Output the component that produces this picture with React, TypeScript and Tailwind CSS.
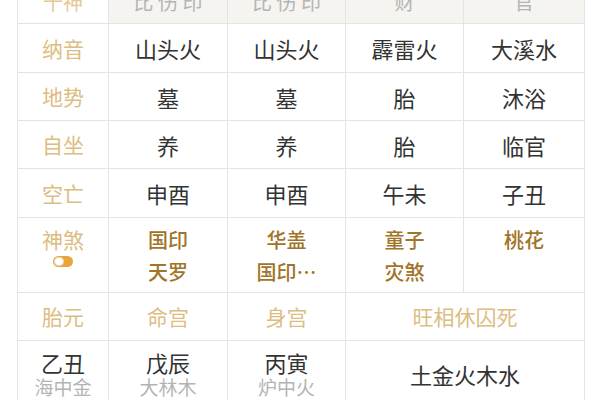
import React from "react";

interface Cell {
  text: string;
  tone?: "label" | "main";
}

// rows of the bazi chart, first column is the label
const rows: { h: string; cells: Cell[] }[] = [
  {
    h: "h-[49px]",
    cells: [{ text: "纳音", tone: "label" }, { text: "山头火" }, { text: "山头火" }, { text: "霹雷火" }, { text: "大溪水" }],
  },
  {
    h: "h-[48px]",
    cells: [{ text: "地势", tone: "label" }, { text: "墓" }, { text: "墓" }, { text: "胎" }, { text: "沐浴" }],
  },
  {
    h: "h-[48px]",
    cells: [{ text: "自坐", tone: "label" }, { text: "养" }, { text: "养" }, { text: "胎" }, { text: "临官" }],
  },
  {
    h: "h-[49px]",
    cells: [{ text: "空亡", tone: "label" }, { text: "申酉" }, { text: "申酉" }, { text: "午未" }, { text: "子丑" }],
  },
];

const shensha = [["国印", "天罗"], ["华盖", "国印…"], ["童子", "灾煞"], ["桃花"]];

const Toggle = () => (
  <div className="mx-auto mt-[6px] flex h-[11px] w-[20px] items-center rounded-full bg-[#e9a53c] p-px">
    <div className="h-[9px] w-[10px] rounded-full border border-[#eadcc4] bg-white" />
  </div>
);

export default function App() {
  return (
    <div
      className="h-[400px] w-[600px] overflow-hidden bg-white"
      style={{ fontFamily: '"Noto Sans CJK SC", "Noto Sans", sans-serif' }}
    >
      <table className="-mt-[25px] ml-[17px] w-[567px] table-fixed border-collapse leading-none">
        <colgroup>
          <col className="w-[91px]" />
          <col className="w-[119px]" />
          <col className="w-[118px]" />
          <col className="w-[118px]" />
          <col className="w-[121px]" />
        </colgroup>
        <tbody>
          <tr className="h-[48px] text-[20px]">
            <td className="border border-[#e4e4e4] bg-white pt-[4px] text-center text-[#e2c895]">十神</td>
            <td className="border border-[#e4e4e4] bg-[#f5f4f0] pt-[4px] text-center text-[#b4b4b4]">比 伤 印</td>
            <td className="border border-[#e4e4e4] bg-[#f5f4f0] pt-[4px] text-center text-[#b4b4b4]">比 伤 印</td>
            <td className="border border-[#e4e4e4] bg-[#f5f4f0] pt-[4px] text-center text-[#b4b4b4]">财</td>
            <td className="border border-[#e4e4e4] bg-[#f5f4f0] pt-[4px] text-center text-[#b4b4b4]">官</td>
          </tr>
          {rows.map((row, i) => (
            <tr key={i} className={row.h}>
              {row.cells.map((c, j) =>
                c.tone === "label" ? (
                  <td key={j} className="border border-[#e4e4e4] text-center text-[21px] text-[#dcbd82]">
                    {c.text}
                  </td>
                ) : (
                  <td key={j} className="border border-[#e4e4e4] text-center text-[22px] text-[#333333]">
                    {c.text}
                  </td>
                )
              )}
            </tr>
          ))}
          <tr className="h-[75px]">
            <td className="border border-[#e4e4e4] pt-[11px] align-top text-center text-[21px] text-[#dcbd82]">
              神煞
              <Toggle />
            </td>
            {shensha.map((list, j) => (
              <td
                key={j}
                className="border border-[#e4e4e4] pt-[12px] align-top text-center text-[20px] font-medium text-[#a07429]"
              >
                <div className="flex flex-col items-center gap-[12px]">
                  {list.map((s) => (
                    <span key={s}>{s}</span>
                  ))}
                </div>
              </td>
            ))}
          </tr>
          <tr className="h-[48px] text-[21px] text-[#dcbd82]">
            <td className="border border-[#e4e4e4] text-center">胎元</td>
            <td className="border border-[#e4e4e4] text-center">命宫</td>
            <td className="border border-[#e4e4e4] text-center">身宫</td>
            <td colSpan={2} className="border border-[#e4e4e4] text-center">
              旺相休囚死
            </td>
          </tr>
          <tr className="h-[66px]">
            {[
              ["乙丑", "海中金"],
              ["戊辰", "大林木"],
              ["丙寅", "炉中火"],
            ].map(([a, b]) => (
              <td key={a} className="border border-[#e4e4e4] pt-[10px] align-top text-center">
                <div className="text-[22px] text-[#333333]">{a}</div>
                <div className="mt-[4px] text-[19px] text-[#b4b4b4]">{b}</div>
              </td>
            ))}
            <td colSpan={2} className="border border-[#e4e4e4] text-center text-[22px] text-[#333333]">
              土金火木水
            </td>
          </tr>
        </tbody>
      </table>
    </div>
  );
}
